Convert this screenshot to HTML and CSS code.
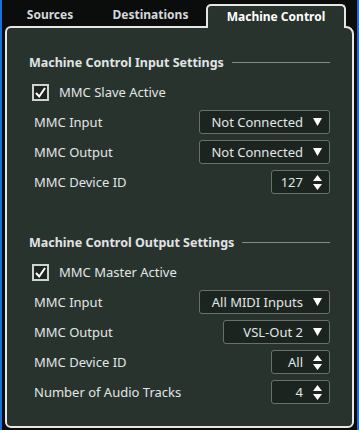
FILE: index.html
```html
<!DOCTYPE html>
<html lang="en">

<head>
    <meta charset="UTF-8">
    <meta name="viewport" content="width=device-width, initial-scale=1.0">
    <title>Machine Control</title>
    <link rel="stylesheet" href="styles.css">
</head>

<body>

    <div class="ventana">

        <!-- Pestañas -->
        <div class="pestanas">
            <div class="pestana fuentes">Sources</div>
            <div class="pestana destinos">Destinations</div>
            <div class="pestana activa">Machine Control</div>
        </div>

        <div class="panel">

            <!-- Entrada -->
            <div class="seccion">
                <div class="titulo">Machine Control Input Settings</div>

                <label class="fila check">
                    <span class="casilla"><svg width="13" height="13" viewBox="0 0 13 13"><path d="M2 7 L5.2 10.5 L11 2" fill="none" stroke="#fff" stroke-width="2"/></svg></span>
                    MMC Slave Active
                </label>

                <div class="fila">
                    <span class="etiqueta">MMC Input</span>
                    <div class="menu ancho">Not Connected <svg class="flecha" width="9" height="8" viewBox="0 0 9 8"><path d="M0 0 H9 L4.5 8 Z" fill="#fff"/></svg></div>
                </div>

                <div class="fila">
                    <span class="etiqueta">MMC Output</span>
                    <div class="menu ancho">Not Connected <svg class="flecha" width="9" height="8" viewBox="0 0 9 8"><path d="M0 0 H9 L4.5 8 Z" fill="#fff"/></svg></div>
                </div>

                <div class="fila">
                    <span class="etiqueta">MMC Device ID</span>
                    <div class="menu corto">127 <svg class="flecha" width="9" height="15" viewBox="0 0 9 15"><path d="M0 6 H9 L4.5 0 Z M0 9 H9 L4.5 15 Z" fill="#fff"/></svg></div>
                </div>
            </div>

            <!-- Salida -->
            <div class="seccion">
                <div class="titulo">Machine Control Output Settings</div>

                <label class="fila check">
                    <span class="casilla"><svg width="13" height="13" viewBox="0 0 13 13"><path d="M2 7 L5.2 10.5 L11 2" fill="none" stroke="#fff" stroke-width="2"/></svg></span>
                    MMC Master Active
                </label>

                <div class="fila">
                    <span class="etiqueta">MMC Input</span>
                    <div class="menu ancho">All MIDI Inputs <svg class="flecha" width="9" height="8" viewBox="0 0 9 8"><path d="M0 0 H9 L4.5 8 Z" fill="#fff"/></svg></div>
                </div>

                <div class="fila">
                    <span class="etiqueta">MMC Output</span>
                    <div class="menu medio">VSL-Out 2 <svg class="flecha" width="9" height="8" viewBox="0 0 9 8"><path d="M0 0 H9 L4.5 8 Z" fill="#fff"/></svg></div>
                </div>

                <div class="fila">
                    <span class="etiqueta">MMC Device ID</span>
                    <div class="menu corto">All <svg class="flecha" width="9" height="15" viewBox="0 0 9 15"><path d="M0 6 H9 L4.5 0 Z M0 9 H9 L4.5 15 Z" fill="#fff"/></svg></div>
                </div>

                <div class="fila">
                    <span class="etiqueta">Number of Audio Tracks</span>
                    <div class="menu corto">4 <svg class="flecha" width="9" height="15" viewBox="0 0 9 15"><path d="M0 6 H9 L4.5 0 Z M0 9 H9 L4.5 15 Z" fill="#fff"/></svg></div>
                </div>
            </div>

        </div>
    </div>

</body>

</html>
```

FILE: styles.css
```css
html,
body {
    height: 100%;
}

body {
    margin: 0;
    font-family: "Noto Sans", "Open Sans", sans-serif;
    font-size: 13px;
    color: #e2e6e8;
    background-color: #0b0c0c;
    border-left: 2px solid #1f6fd8;
    border-right: 2px solid #1f6fd8;
    box-sizing: border-box;
}

.ventana {
    padding: 0 3px 2px 3px;
}

.pestanas {
    display: flex;
    align-items: flex-end;
    height: 26px;
}

.pestana {
    font-weight: bold;
    font-size: 12px;
    color: #d4d8da;
    text-align: center;
    line-height: 22px;
}

.fuentes {
    width: 90px;
}

.destinos {
    width: 111px;
}

.activa {
    position: relative;
    z-index: 1;
    width: 136px;
    height: 22px;
    margin-bottom: -2px;
    line-height: 22px;
    color: #fff;
    background-color: #29332d;
    border: 2px solid #e6e6e6;
    border-bottom: none;
    border-radius: 5px 5px 0 0;
}

.panel {
    height: 402px;
    padding: 19px 22px 0 22px;
    background-color: #29332d;
    border: 2px solid #e6e6e6;
    border-radius: 6px;
    border-top-right-radius: 8px;
    box-sizing: border-box;
}

.seccion {
    margin-bottom: 30px;
}

.titulo {
    display: flex;
    align-items: center;
    height: 30px;
    font-weight: bold;
    font-size: 12.5px;
    color: #e0e4e6;
}

.titulo::after {
    content: "";
    flex: 1;
    height: 1px;
    margin-left: 8px;
    background-color: #858b87;
}

.fila {
    display: flex;
    align-items: center;
    justify-content: space-between;
    height: 30px;
    padding-left: 5px;
}

.check {
    justify-content: flex-start;
    gap: 10px;
    padding-left: 3px;
}

.casilla {
    display: flex;
    align-items: center;
    justify-content: center;
    width: 13px;
    height: 13px;
    border: 2px solid #cfd3d1;
    background-color: #1d2521;
}

.menu {
    display: flex;
    align-items: center;
    justify-content: flex-end;
    gap: 10px;
    height: 22px;
    padding: 0 7px 0 8px;
    background-color: #1c2420;
    border: 1px solid #69706b;
    border-radius: 3px;
    box-sizing: content-box;
}

.ancho {
    width: 114px;
}

.medio {
    width: 90px;
}

.corto {
    width: 42px;
}

.flecha {
    flex-shrink: 0;
}
```
